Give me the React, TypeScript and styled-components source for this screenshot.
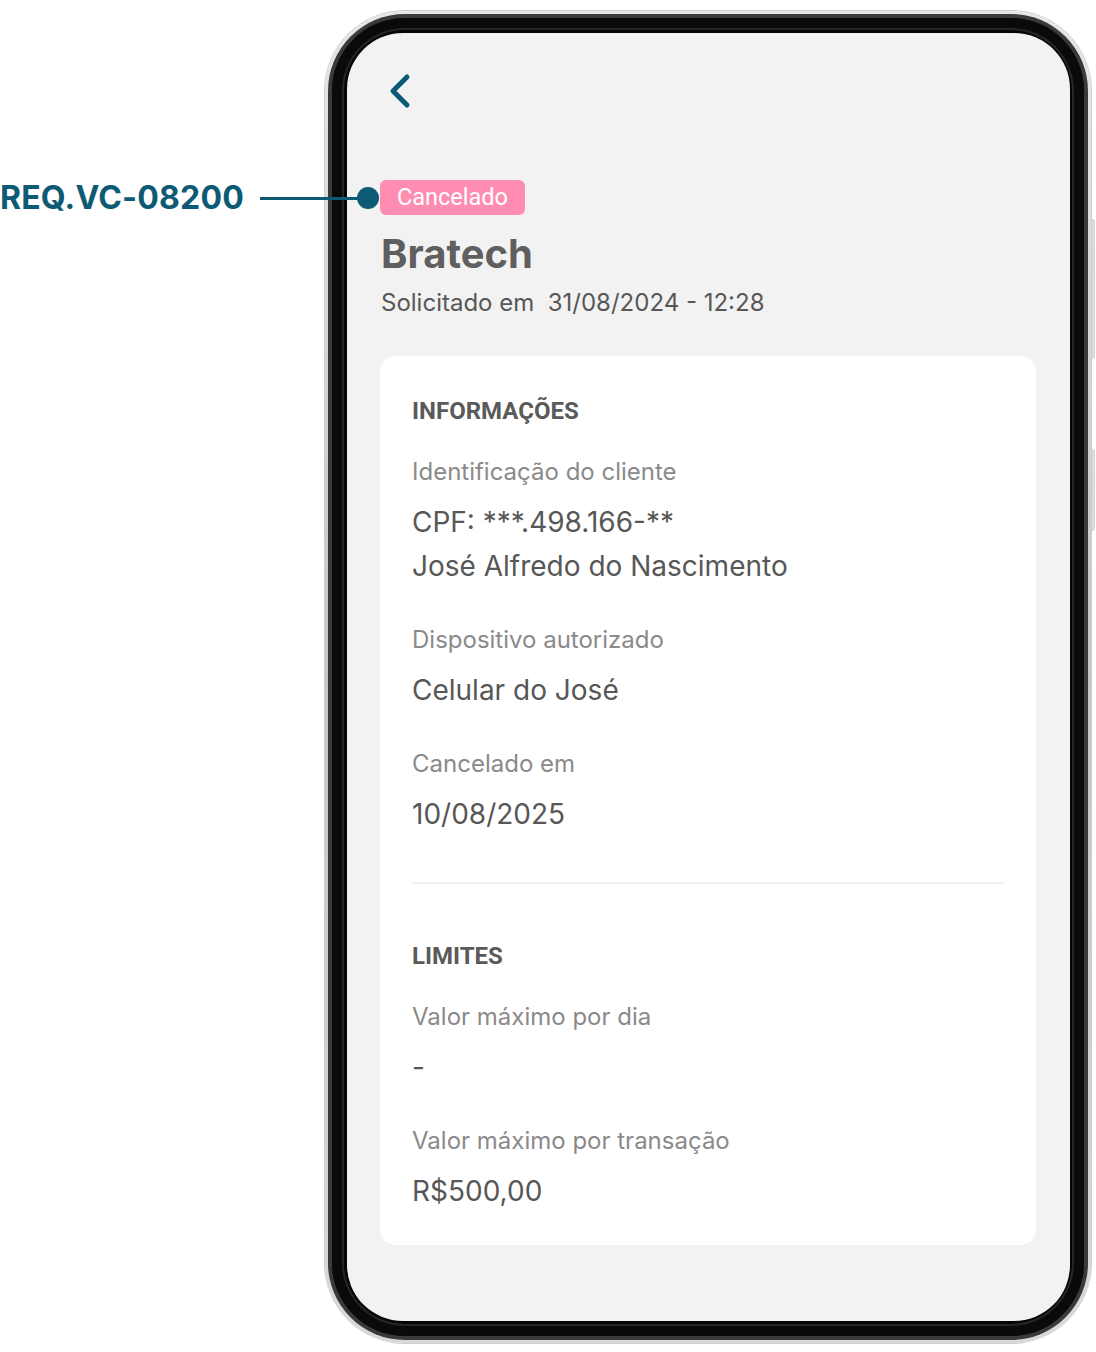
import React from "react";
import styled, { createGlobalStyle } from "styled-components";

const GlobalStyle = createGlobalStyle`
  html, body { margin: 0; padding: 0; background: #ffffff; }
  body { font-family: Inter, "Noto Sans", sans-serif; -webkit-font-smoothing: antialiased; }
  * { box-sizing: border-box; }
`;

const Page = styled.div`
  position: relative;
  width: 1096px;
  height: 1352px;
  overflow: hidden;
  background: #fff;
  padding: 11px 0 0 325px;
`;

const Annotation = styled.div`
  position: absolute;
  left: 0;
  top: 182px;
  display: flex;
  align-items: center;
  z-index: 5;
`;

const AnnotationText = styled.span`
  font-family: Inter, sans-serif;
  font-weight: 700;
  font-size: 32px;
  line-height: 32px;
  color: #0d5a74;
  letter-spacing: 0.2px;
`;

const AnnotationLine = styled.span`
  display: block;
  width: 100px;
  height: 3px;
  margin-left: 16px;
  background: #0d5a74;
`;

const AnnotationDot = styled.span`
  display: block;
  width: 22px;
  height: 22px;
  border-radius: 50%;
  background: #0d5a74;
  margin-left: -3px;
`;

const Phone = styled.div`
  position: relative;
  width: 766px;
  height: 1332px;
  border-radius: 80px;
  padding: 3px;
  background: linear-gradient(180deg, #e6e6e6 0%, #c4c4c4 50%, #d8d8d8 100%);
  box-shadow: 0 0 0 1px #cfcfcf;
`;

const SideButton = styled.span<{ $top: number; $height: number }>`
  position: absolute;
  right: -4px;
  top: ${(p) => p.$top}px;
  width: 4px;
  height: ${(p) => p.$height}px;
  border-radius: 0 3px 3px 0;
  background: linear-gradient(90deg, #c8c8c8, #e8e8e8);
  border: 1px solid #cfcfcf;
  border-left: none;
`;

const Bezel = styled.div`
  width: 100%;
  height: 100%;
  border-radius: 77px;
  padding: 4px;
  background: #3a3a3a;
`;

const BezelInner = styled.div`
  width: 100%;
  height: 100%;
  border-radius: 73px;
  padding: 15px 14px 15px 15px;
  background: #050505;
  box-shadow: inset 0 0 0 10px #0a0a0a, inset 0 0 0 12px #262626;
`;

const Screen = styled.div`
  width: 100%;
  height: 100%;
  border-radius: 56px;
  background: #f2f2f2;
  padding: 40px 35px 0 33px;
  display: flex;
  flex-direction: column;
  align-items: flex-start;
  overflow: hidden;
`;

const BackButton = styled.button`
  border: none;
  background: none;
  padding: 0;
  margin: 0 0 0 7px;
  width: 24px;
  height: 36px;
  display: flex;
  cursor: pointer;
`;

const Badge = styled.span`
  margin-top: 71px;
  height: 35px;
  padding: 0 17px;
  display: inline-flex;
  align-items: center;
  border-radius: 6px;
  background: #ff8db2;
  color: #ffffff;
  font-family: Roboto, sans-serif;
  font-size: 23.5px;
  line-height: 35px;
`;

const Title = styled.h1`
  margin: 15px 0 0 1px;
  font-family: Inter, sans-serif;
  font-weight: 700;
  font-size: 40px;
  line-height: 48px;
  color: #5f5f5f;
`;

const Subtitle = styled.p`
  margin: 10px 0 0 1px;
  font-family: Inter, sans-serif;
  font-size: 24px;
  line-height: 30px;
  color: #575757;
  white-space: pre;
`;

const Card = styled.section`
  margin-top: 38px;
  width: 656px;
  background: #ffffff;
  border-radius: 16px;
  padding: 40px 32px 32px 32px;
  display: flex;
  flex-direction: column;
`;

const SectionTitle = styled.h2`
  margin: 0;
  font-family: Roboto, sans-serif;
  font-weight: 700;
  font-size: 24px;
  line-height: 30px;
  color: #5a5a5a;
`;

const Fields = styled.div`
  margin-top: 31px;
  display: flex;
  flex-direction: column;
  gap: 37px;
`;

const Field = styled.div`
  display: flex;
  flex-direction: column;
`;

const Label = styled.span`
  font-family: Inter, sans-serif;
  font-size: 24px;
  line-height: 30px;
  color: #8a8a8a;
`;

const Values = styled.div`
  margin-top: 13px;
  display: flex;
  flex-direction: column;
`;

const Value = styled.span`
  font-family: Inter, sans-serif;
  font-size: 28px;
  line-height: 44px;
  color: #575757;
`;

const Divider = styled.hr`
  margin: 46px 0 57px 0;
  border: none;
  height: 2px;
  background: #f2f2f2;
`;

type FieldData = { label: string; values: string[] };

const info: FieldData[] = [
  { label: "Identificação do cliente", values: ["CPF: ***.498.166-**", "José Alfredo do Nascimento"] },
  { label: "Dispositivo autorizado", values: ["Celular do José"] },
  { label: "Cancelado em", values: ["10/08/2025"] },
];

const limits: FieldData[] = [
  { label: "Valor máximo por dia", values: ["-"] },
  { label: "Valor máximo por transação", values: ["R$500,00"] },
];

const FieldList = ({ items }: { items: FieldData[] }) => (
  <Fields>
    {items.map((f) => (
      <Field key={f.label}>
        <Label>{f.label}</Label>
        <Values>
          {f.values.map((v) => (
            <Value key={v}>{v}</Value>
          ))}
        </Values>
      </Field>
    ))}
  </Fields>
);

export default function App() {
  return (
    <>
      <GlobalStyle />
      <Page>
        <Annotation>
          <AnnotationText>REQ.VC-08200</AnnotationText>
          <AnnotationLine />
          <AnnotationDot />
        </Annotation>
        <Phone>
          <SideButton $top={208} $height={140} />
          <SideButton $top={438} $height={82} />
          <Bezel>
            <BezelInner>
              <Screen>
                <BackButton aria-label="Voltar">
                  <svg width="24" height="36" viewBox="0 0 24 36" fill="none">
                    <path d="M20 4 L6 18 L20 32" stroke="#0b5b76" strokeWidth="5" strokeLinecap="round" strokeLinejoin="round" />
                  </svg>
                </BackButton>
                <Badge>Cancelado</Badge>
                <Title>Bratech</Title>
                <Subtitle>{"Solicitado em  31/08/2024 - 12:28"}</Subtitle>
                <Card>
                  <SectionTitle>INFORMAÇÕES</SectionTitle>
                  <FieldList items={info} />
                  <Divider />
                  <SectionTitle>LIMITES</SectionTitle>
                  <FieldList items={limits} />
                </Card>
              </Screen>
            </BezelInner>
          </Bezel>
        </Phone>
      </Page>
    </>
  );
}
